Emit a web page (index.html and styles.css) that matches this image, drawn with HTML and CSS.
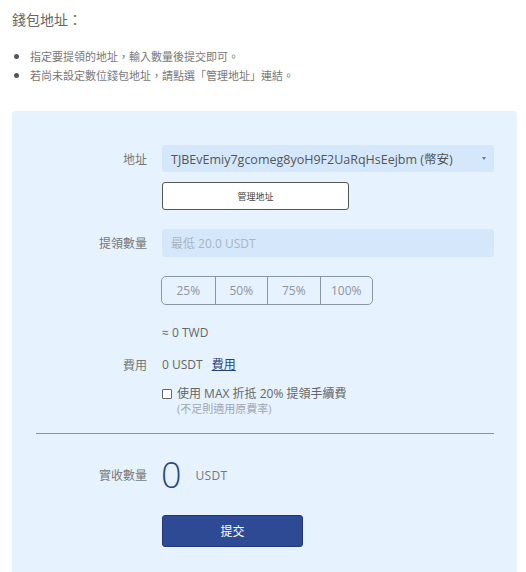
FILE: index.html
```html
<!DOCTYPE html>
<html lang="zh-Hant">
<head>
<meta charset="utf-8">
<link rel="stylesheet" href="styles.css">
</head>
<body>
<div class="page">
  <h2 class="title">錢包地址：</h2>
  <ul class="notes">
    <li>指定要提領的地址，輸入數量後提交即可。</li>
    <li>若尚未設定數位錢包地址，請點選「管理地址」連結。</li>
  </ul>
  <div class="panel">
    <div class="row row-select">
      <div class="label">地址</div>
      <div class="field select">
        <span>TJBEvEmiy7gcomeg8yoH9F2UaRqHsEejbm (幣安)</span>
        <span class="caret"></span>
      </div>
    </div>
    <div class="row row-manage">
      <div class="label"></div>
      <button class="btn-outline">管理地址</button>
    </div>
    <div class="row row-amount">
      <div class="label">提領數量</div>
      <div class="field input"><span class="placeholder">最低 20.0 USDT</span></div>
    </div>
    <div class="row row-pct">
      <div class="label"></div>
      <div class="pct-group">
        <span class="pct">25%</span><span class="pct">50%</span><span class="pct">75%</span><span class="pct">100%</span>
      </div>
    </div>
    <div class="row row-twd">
      <div class="label"></div>
      <div class="text">≈ 0 TWD</div>
    </div>
    <div class="row row-fee">
      <div class="label">費用</div>
      <div class="text">0 USDT <a class="fee-link">費用</a></div>
    </div>
    <div class="row row-check">
      <div class="label"></div>
      <div class="check">
        <span class="box"></span>
        <div class="check-text">
          <div class="check-main">使用 MAX 折抵 20% 提領手續費</div>
          <div class="check-sub">(不足則適用原費率)</div>
        </div>
      </div>
    </div>
    <div class="divider"></div>
    <div class="row row-recv">
      <div class="label">實收數量</div>
      <div class="recv"><span class="big">0</span><span class="unit">USDT</span></div>
    </div>
    <div class="row row-submit">
      <div class="label"></div>
      <button class="btn-primary">提交</button>
    </div>
  </div>
</div>
</body>
</html>
```

FILE: styles.css
```css
* { box-sizing: border-box; }
html, body { margin: 0; padding: 0; background: #fff; }
body {
  font-family: "Open Sans", "Noto Sans CJK TC", sans-serif;
  color: #666;
}
.page { padding: 0 9px 0 12px; }
.title {
  margin: 10px 0 0;
  font-size: 14px;
  line-height: 20px;
  font-weight: 400;
  color: #666;
}
.notes {
  margin: 17px 0 0;
  padding: 0 0 0 18px;
  font-size: 11px;
  line-height: 18px;
  color: #777;
}
.notes li::marker { color: #555; font-size: 13px; }
.panel {
  margin-top: 26px;
  background: #e6f2fe;
  border-radius: 4px 4px 0 0;
  padding: 34px 23px 40px 0;
  min-height: 480px;
}
.row { display: flex; align-items: center; }
.label {
  width: 135px;
  flex: none;
  margin-right: 15px;
  text-align: right;
  font-size: 12px;
  color: #777;
}
.field {
  flex: 1;
  height: 27px;
  background: #d5e8fb;
  border-radius: 3px;
  display: flex;
  align-items: center;
  padding: 0 8px 0 9px;
  font-size: 12.5px;
}
.select { color: #555; justify-content: space-between; }
.caret {
  width: 0; height: 0;
  border-left: 2.5px solid transparent;
  border-right: 2.5px solid transparent;
  border-top: 3px solid #777;
}
.input { height: 28px; }
.placeholder { color: #aab4be; font-size: 12px; }
.row-manage { margin-top: 10px; }
.btn-outline {
  width: 187px;
  height: 28px;
  background: #fff;
  border: 1px solid #555;
  border-radius: 3px;
  font-family: inherit;
  font-size: 9px;
  color: #444;
  padding: 0;
}
.row-amount { margin-top: 19px; }
.row-pct { margin-top: 19px; }
.pct-group {
  display: flex;
  border: 1px solid #8a97a4;
  border-radius: 5px;
  height: 29px;
  margin-left: -1px;
}
.pct {
  width: 52.5px;
  display: flex;
  align-items: center;
  justify-content: center;
  font-size: 12px;
  color: #8f949a;
  border-left: 1px solid #8a97a4;
}
.pct:first-child { border-left: none; }
.text { font-size: 12px; color: #666; line-height: 18px; }
.row-twd { margin-top: 19px; }
.row-fee { margin-top: 14px; }
.fee-link {
  color: #2b3f7a;
  text-decoration: underline;
  margin-left: 6px;
}
.row-check { margin-top: 12px; align-items: flex-start; }
.check { display: flex; align-items: flex-start; }
.box {
  width: 10px; height: 10px;
  border: 1px solid #666;
  border-radius: 1px;
  background: #fff;
  margin-top: 3px;
  margin-right: 5px;
}
.check-main { font-size: 12px; line-height: 16px; color: #666; }
.check-sub { font-size: 11px; line-height: 13px; color: #a0a8b1; }
.divider {
  margin: 18px 0 0 24px;
  height: 1px;
  background: #8d9298;
}
.row-recv { margin-top: 21px; }
.recv { display: flex; align-items: center; }
.big {
  font-size: 36px;
  line-height: 40px;
  font-weight: 300;
  color: #2b4585;
  margin-left: -1px;
}
.unit { font-size: 12px; color: #777; margin-left: 14px; letter-spacing: 0.3px; }
.row-submit { margin-top: 20px; }
.btn-primary {
  width: 141px;
  height: 32px;
  background: #2e4a94;
  border: 1px solid #1f3677;
  border-radius: 3px;
  color: #fff;
  font-family: inherit;
  font-size: 12px;
  padding: 0;
}
```
